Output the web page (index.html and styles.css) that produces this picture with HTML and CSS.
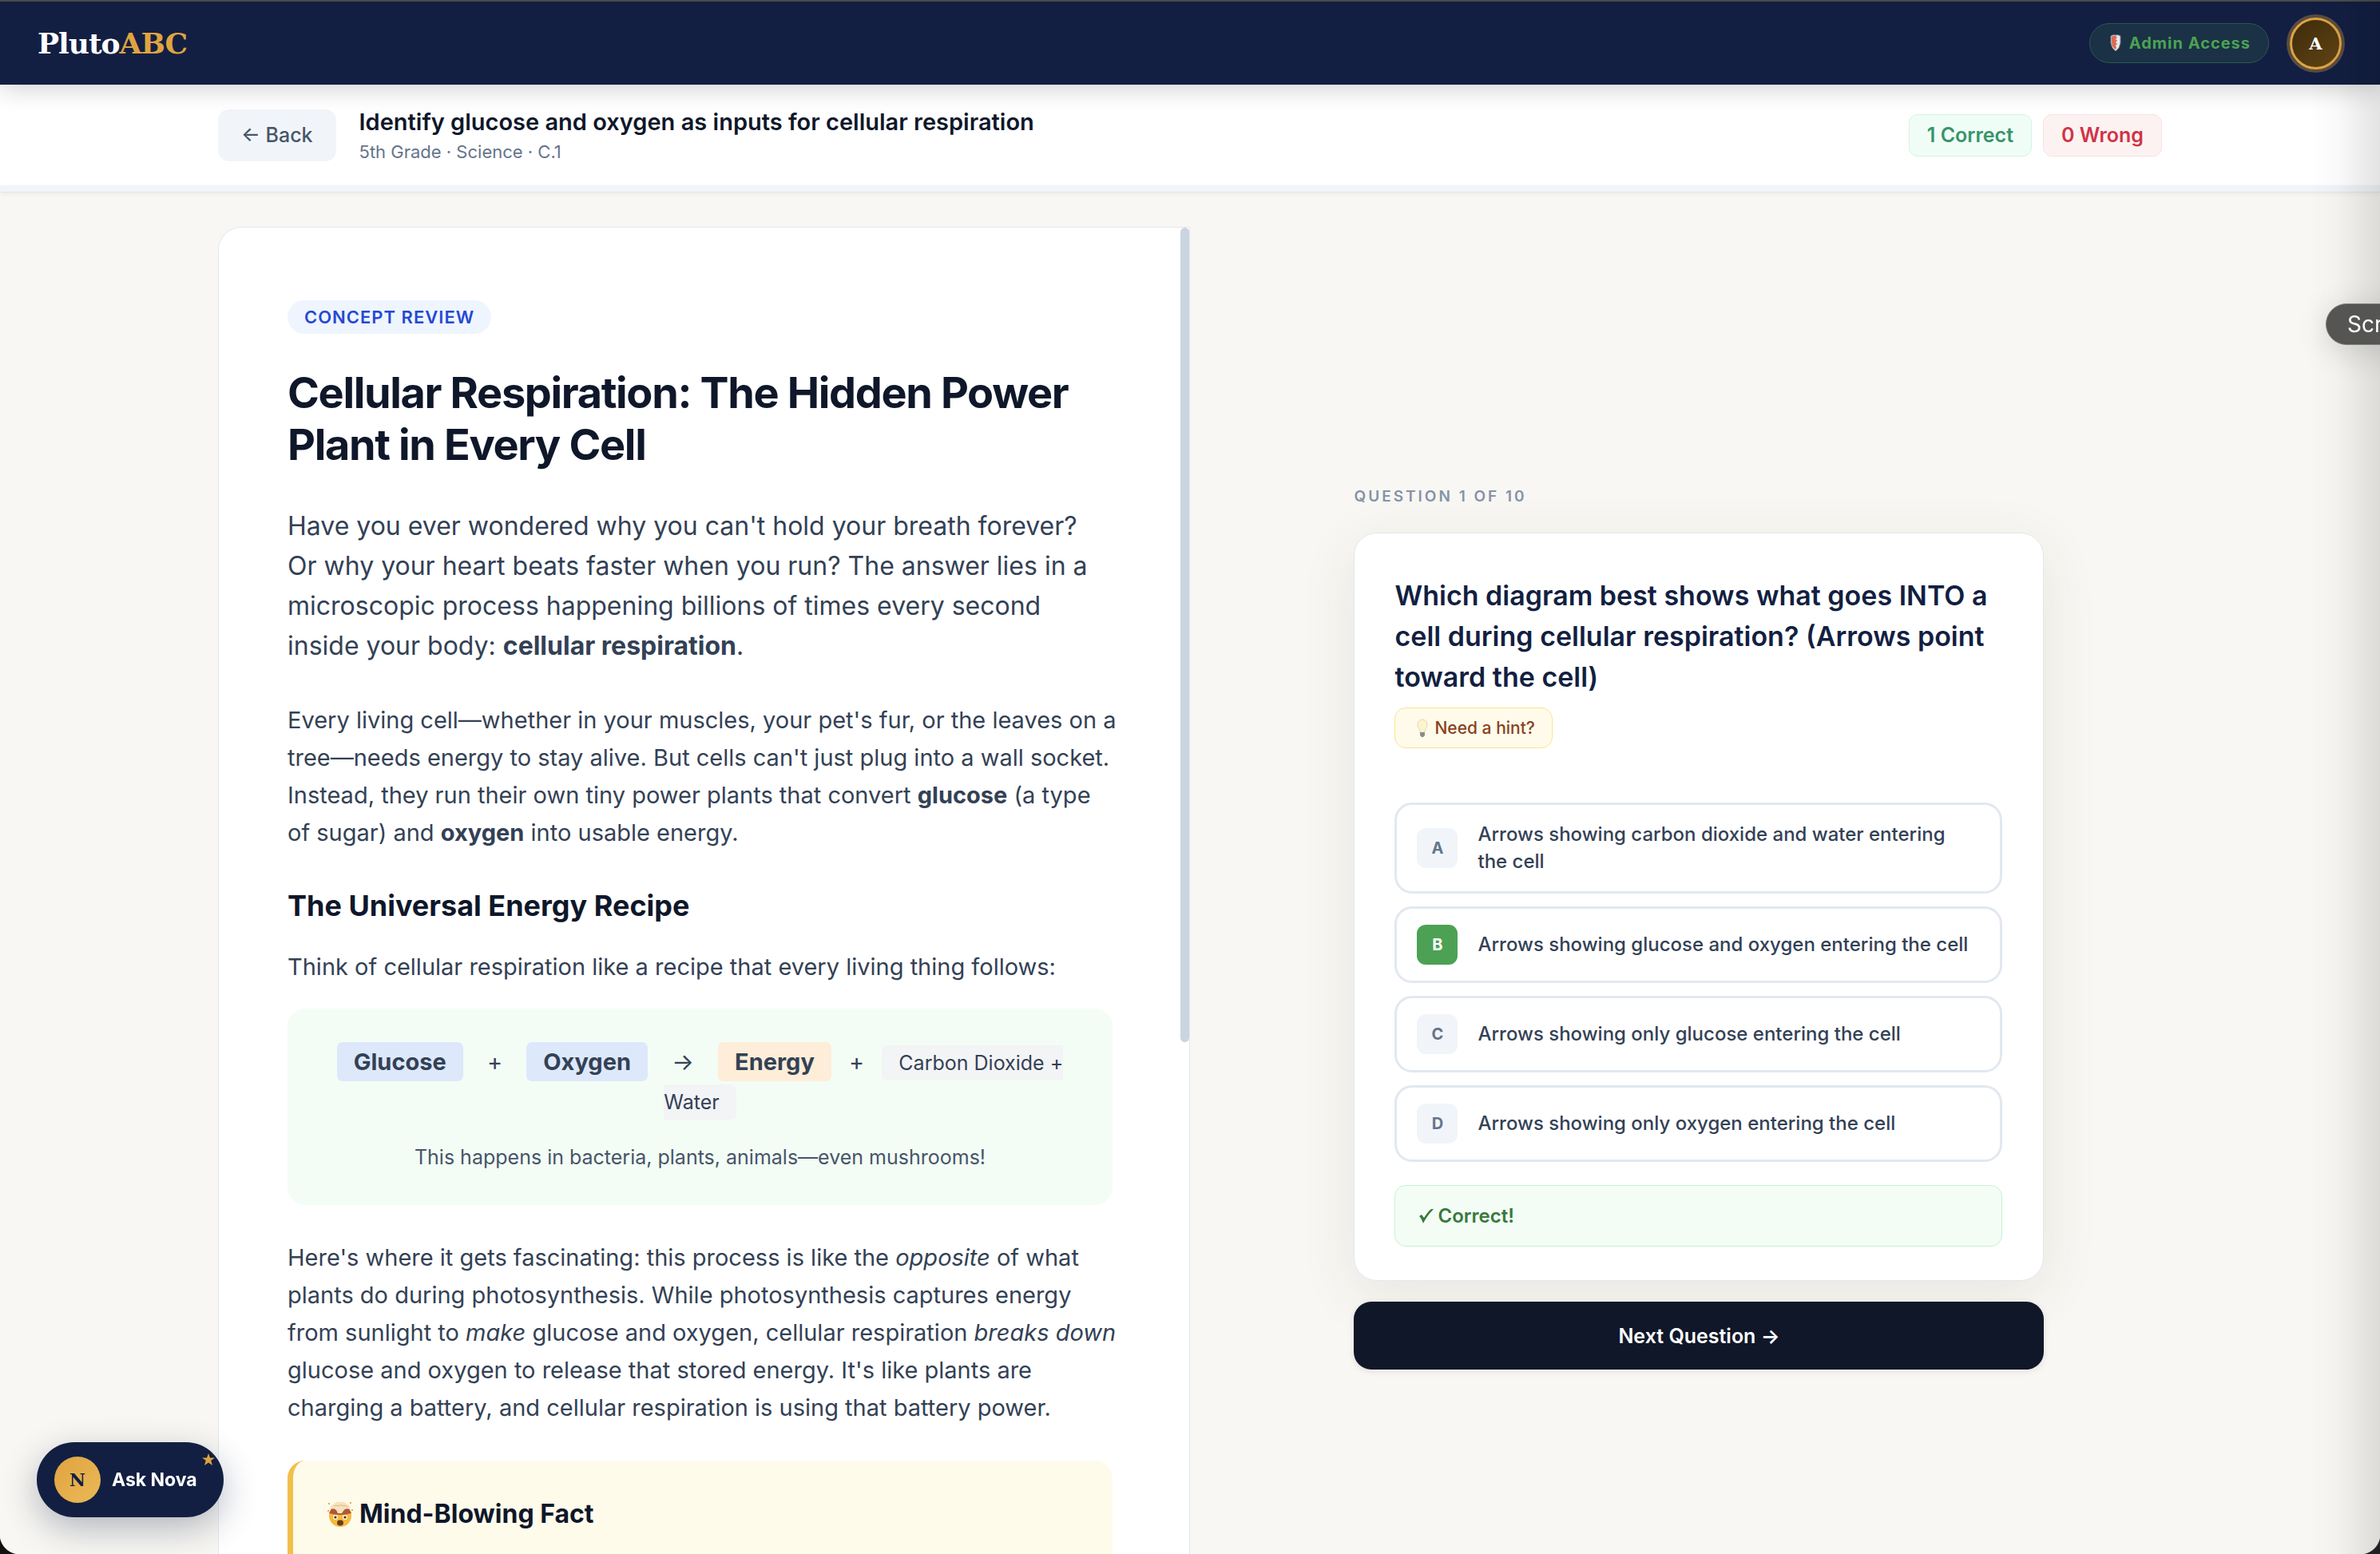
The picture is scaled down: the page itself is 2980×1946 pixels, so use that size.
FILE: index.html
```html
<!DOCTYPE html>
<html lang="en">
<head>
    <meta charset="UTF-8">
    <meta name="viewport" content="width=device-width, initial-scale=1.0">
    <title>PlutoABC</title>
    <link rel="stylesheet" href="styles.css">
</head>
<body>
    <header class="header">
        <a class="header__logo" href="#">Pluto<span>ABC</span></a>
        <div class="header__user">
            <span class="header__role">
                <svg class="header__shield" viewBox="0 0 14 22" aria-hidden="true">
                    <path d="M1 2Q4 0 7 1Q10 0 13 2V11Q12 18 7 21Q2 18 1 11Z" fill="#e9eaec" stroke="#6f7b86"/>
                    <path d="M2 3Q4 1 7 2L9 4L7 6L9 8L7 10L9 12L7 14L8 17L7 19Q3 17 2 11Z" fill="#dd6a58"/>
                </svg>
                Admin Access
            </span>
            <button class="header__avatar">A</button>
        </div>
    </header>

    <div class="lesson-bar">
        <div class="lesson-bar__inner">
            <button class="lesson-bar__back">← Back</button>
            <div class="lesson-bar__text">
                <h1 class="lesson-bar__title">Identify glucose and oxygen as inputs for cellular respiration</h1>
                <p class="lesson-bar__meta">5th Grade · Science · C.1</p>
            </div>
            <div class="score">
                <span class="score__item score__item--correct">1 Correct</span>
                <span class="score__item score__item--wrong">0 Wrong</span>
            </div>
        </div>
    </div>
    <div class="progress"></div>

    <main class="main">
        <section class="article">
            <div class="article__scrollbar"></div>
            <span class="article__badge">CONCEPT REVIEW</span>
            <h2 class="article__title">Cellular Respiration: The Hidden Power Plant in Every Cell</h2>
            <p class="article__lead">Have you ever wondered why you can't hold your breath forever? Or why your heart beats faster when you run? The answer lies in a microscopic process happening billions of times every second inside your body: <strong>cellular respiration</strong>.</p>
            <p class="article__text">Every living cell—whether in your muscles, your pet's fur, or the leaves on a tree—needs energy to stay alive. But cells can't just plug into a wall socket. Instead, they run their own tiny power plants that convert <strong>glucose</strong> (a type of sugar) and <strong>oxygen</strong> into usable energy.</p>
            <h3 class="article__heading">The Universal Energy Recipe</h3>
            <p class="article__text">Think of cellular respiration like a recipe that every living thing follows:</p>
            <div class="recipe">
                <div class="recipe__row">
                    <span class="recipe__item recipe__item--input">Glucose</span>
                    <span class="recipe__sign">+</span>
                    <span class="recipe__item recipe__item--input">Oxygen</span>
                    <span class="recipe__sign">→</span>
                    <span class="recipe__item recipe__item--energy">Energy</span>
                    <span class="recipe__sign recipe__sign--last">+</span>
                    <span class="recipe__item recipe__item--waste">Carbon Dioxide + Water</span>
                </div>
                <p class="recipe__note">This happens in bacteria, plants, animals—even mushrooms!</p>
            </div>
            <p class="article__text">Here's where it gets fascinating: this process is like the <em>opposite</em> of what plants do during photosynthesis. While photosynthesis captures energy from sunlight to <em>make</em> glucose and oxygen, cellular respiration <em>breaks down</em> glucose and oxygen to release that stored energy. It's like plants are charging a battery, and cellular respiration is using that battery power.</p>
            <div class="fact">
                <h3 class="fact__title">
                    <svg class="fact__icon" viewBox="0 0 32 32" aria-hidden="true">
                        <circle cx="16" cy="18" r="14" fill="#f7b93c"/>
                        <path d="M2 15Q16 19 30 15L27 9H5Z" fill="#b2573a"/>
                        <path d="M4 10Q2 4 8 4Q10 0 16 1Q22 0 24 4Q30 4 28 10Q22 8 20 12L18 15H13L11 11Q8 8 4 10Z" fill="#f6e3bd"/>
                        <path d="M8 6Q11 4 13 6Q17 3 20 6Q23 4 25 7" fill="none" stroke="#dfb781" stroke-width="1"/>
                        <circle cx="10" cy="20" r="3" fill="#fff6dc"/>
                        <circle cx="22" cy="20" r="3" fill="#fff6dc"/>
                        <circle cx="10" cy="20" r="1.6" fill="#4d2b12"/>
                        <circle cx="22" cy="20" r="1.6" fill="#4d2b12"/>
                        <ellipse cx="16" cy="27" rx="4" ry="3.4" fill="#6b3b1c"/>
                        <path d="M1 2h2v2h-2zM28 1h2v2h-2zM0 11h2v2h-2zM30 10h2v2h-2z" fill="#f2a83b"/>
                    </svg>
                    Mind-Blowing Fact
                </h3>
            </div>
        </section>

        <section class="quiz">
            <p class="quiz__counter">QUESTION 1 OF 10</p>
            <div class="quiz__card">
                <h2 class="quiz__question">Which diagram best shows what goes INTO a cell during cellular respiration? (Arrows point toward the cell)</h2>
                <button class="quiz__hint">
                    <svg class="quiz__bulb" viewBox="0 0 14 24" aria-hidden="true">
                        <path d="M7 1a6 6 0 0 0-6 7c0 4 3 5 3 9h6c0-4 3-5 3-9a6 6 0 0 0-6-7z" fill="#fdf3cf" stroke="#e6d9ad"/>
                        <path d="M4 17h6v4l-2 2h-2l-2-2z" fill="#8d8d8b"/>
                    </svg>
                    Need a hint?
                </button>
                <div class="quiz__options">
                    <button class="option"><span class="option__letter">A</span><span>Arrows showing carbon dioxide and water entering the cell</span></button>
                    <button class="option"><span class="option__letter option__letter--correct">B</span><span>Arrows showing glucose and oxygen entering the cell</span></button>
                    <button class="option"><span class="option__letter">C</span><span>Arrows showing only glucose entering the cell</span></button>
                    <button class="option"><span class="option__letter">D</span><span>Arrows showing only oxygen entering the cell</span></button>
                </div>
                <div class="quiz__feedback">
                    <svg class="quiz__check" viewBox="0 0 18 18" aria-hidden="true">
                        <path d="M0 9L3 7L6 11Q11 3 15 0H18Q10 8 5 18Q3 12 0 9Z" fill="#38793d"/>
                    </svg>
                    Correct!
                </div>
            </div>
            <button class="quiz__next">Next Question →</button>
        </section>
    </main>

    <button class="nova">
        <span class="nova__avatar">N</span>
        Ask Nova
        <svg class="nova__star" viewBox="0 0 16 15" aria-hidden="true">
            <path d="M8 0L10 5.500H16L11.200 9L13 15L8 11.400L3 15L4.800 9L0 5.500H6Z" fill="#dfa440"/>
        </svg>
    </button>
    <div class="edge-shade"></div>
    <div class="tooltip">Screenshot</div>
    <div class="corner corner--left"></div>
    <div class="corner corner--right"></div>
</body>
</html>
```
FILE: styles.css
```css
* {
    box-sizing: border-box;
}
body {
    margin: 0;
    height: 100vh;
    overflow: hidden;
    display: flex;
    flex-direction: column;
    font-family: "Inter", "Liberation Sans", sans-serif;
    color: #334155;
    background-color: #f8f7f3;
}
h1, h2, h3, p {
    margin: 0;
}
button {
    font-family: inherit;
    border: none;
    cursor: pointer;
}
.header {
    position: relative;
    z-index: 2;
    display: flex;
    justify-content: space-between;
    align-items: center;
    height: 106px;
    padding: 0 44px 0 47px;
    border-top: 2px solid #4b4b4b;
    background-color: #131f42;
    box-shadow: 0 4px 30px rgba(0, 0, 0, 0.2);
}
.header__logo {
    font-family: "DejaVu Serif", serif;
    font-size: 36px;
    font-weight: bold;
    letter-spacing: -1px;
    color: #fff;
    text-decoration: none;
}
.header__logo span {
    color: #dfa440;
}
.header__user {
    display: flex;
    align-items: center;
    gap: 22px;
}
.header__role {
    display: flex;
    align-items: center;
    gap: 10px;
    height: 50px;
    padding: 0 22px 0 25px;
    border: 1px solid #2a5a4e;
    border-radius: 25px;
    background-color: #1b3145;
    color: #4aa354;
    font-size: 20px;
    font-weight: 700;
    letter-spacing: 1px;
}
.header__shield {
    width: 14px;
    height: 22px;
}
.header__avatar {
    width: 65px;
    height: 65px;
    margin: 4px;
    padding: 0;
    border: 3px solid #dfa440;
    border-radius: 50%;
    background: linear-gradient(135deg, #3d2b0b, #634515);
    box-shadow: 0 0 0 4px #5a4c41;
    color: #fff;
    font-family: "DejaVu Serif", serif;
    font-size: 21px;
    font-weight: bold;
}
.lesson-bar {
    padding: 0 43px;
    background-color: #fff;
}
.lesson-bar__inner {
    display: flex;
    align-items: center;
    gap: 29px;
    height: 126px;
    max-width: 2434px;
    margin: 0 auto;
}
.lesson-bar__back {
    height: 65px;
    padding: 0 29px;
    border-radius: 14px;
    background-color: #f1f5f9;
    color: #475569;
    font-size: 25px;
    font-weight: 500;
}
.lesson-bar__text {
    padding-top: 4px;
}
.lesson-bar__title {
    font-size: 29px;
    line-height: 38px;
    font-weight: 600;
    color: #0f172a;
}
.lesson-bar__meta {
    font-size: 22px;
    line-height: 36px;
    color: #64748b;
}
.score {
    display: flex;
    gap: 14px;
    margin-left: auto;
}
.score__item {
    padding: 0 22px;
    border: 1px solid;
    border-radius: 11px;
    font-size: 25px;
    line-height: 51px;
    font-weight: 600;
}
.score__item--correct {
    color: #38946a;
    background-color: #f0fdf7;
    border-color: #d3f5e1;
}
.score__item--wrong {
    color: #d03447;
    background-color: #fdf2f2;
    border-color: #fbe0e2;
}
.progress {
    flex-shrink: 0;
    height: 9px;
    background-color: #f1f5f9;
    border-bottom: 1px solid #e2e8f0;
    box-shadow: 0 2px 5px rgba(0, 0, 0, 0.05);
}
.main {
    flex: 1;
    min-height: 0;
    display: grid;
    grid-template-columns: 21fr 20fr;
    gap: 58px;
    width: calc(100% - 86px);
    max-width: 2434px;
    margin: 0 auto;
    padding-top: 43px;
}
.article {
    position: relative;
    overflow: hidden;
    padding: 86px 96px 0 86px;
    border: 1px solid #e2e8f0;
    border-bottom: none;
    border-radius: 29px 0 0 0;
    background-color: #fff;
    font-size: 29px;
    line-height: 47px;
}
/* thumb of the reading pane */
.article__scrollbar {
    position: absolute;
    top: 0;
    right: 0;
    width: 11px;
    height: 1020px;
    border-radius: 6px;
    background-color: #cbd5e1;
}
.article__badge {
    display: inline-block;
    padding: 0 21px;
    border-radius: 21px;
    background-color: #eff5ff;
    color: #2549d3;
    font-size: 22px;
    line-height: 42px;
    font-weight: 600;
    letter-spacing: 1px;
}
.article__title {
    margin-top: 41px;
    font-size: 54px;
    line-height: 65px;
    font-weight: 700;
    letter-spacing: -0.025em;
    color: #0f172a;
}
.article__lead {
    margin: 45px 0 44px;
    padding-right: 10px;
    font-size: 32px;
    line-height: 50px;
}
.article__text {
    margin-right: -6px;
}
.article__heading {
    margin: 45px 0 29px;
    font-size: 36px;
    line-height: 47px;
    font-weight: 700;
    color: #0f172a;
}
.recipe {
    margin: 29px 0 42px;
    padding: 43px 43px 36px;
    border-radius: 22px;
    background-color: #f3fdf5;
    text-align: center;
}
.recipe__item {
    padding: 7px 21px;
    border-radius: 7px;
    font-weight: 700;
}
.recipe__item--input {
    background-color: #dde8fb;
}
.recipe__item--energy {
    background-color: #feedd8;
}
.recipe__item--waste {
    background-color: #f3f4f6;
    font-size: 25px;
    font-weight: 400;
}
.recipe__sign {
    margin: 0 22px;
}
.recipe__sign--last {
    margin: 0 14px;
}
.recipe__note {
    margin-top: 22px;
    font-size: 25px;
    color: #475569;
}
.fact {
    margin-top: 43px;
    padding: 43px 43px 200px;
    border-left: 7px solid #f2bf4a;
    border-radius: 22px;
    background-color: #fffbeb;
}
.fact__title {
    display: flex;
    align-items: center;
    gap: 8px;
    font-size: 32px;
    font-weight: 700;
    color: #0f172a;
}
.fact__icon {
    width: 32px;
    height: 32px;
}
.quiz {
    width: 100%;
    max-width: 864px;
    margin: 0 auto;
    padding-top: 325px;
}
.quiz__counter {
    margin-bottom: 33px;
    font-size: 19px;
    line-height: 25px;
    font-weight: 600;
    letter-spacing: 3px;
    color: #8592a8;
}
.quiz__card {
    padding: 52px 51px 42px 50px;
    border: 1px solid #e2e8f0;
    border-radius: 29px;
    background-color: #fff;
    box-shadow: 0 18px 72px rgba(60, 50, 30, 0.09);
}
.quiz__question {
    margin-bottom: 13px;
    font-size: 34px;
    line-height: 51px;
    font-weight: 600;
    color: #131f42;
}
.quiz__hint {
    display: flex;
    align-items: center;
    gap: 8px;
    height: 51px;
    padding: 0 21px 0 27px;
    border: 1px solid #fbe38d;
    border-radius: 14px;
    background-color: #fffbeb;
    color: #88421b;
    font-size: 21px;
    font-weight: 500;
}
.quiz__bulb {
    width: 14px;
    height: 24px;
}
.quiz__options {
    display: flex;
    flex-direction: column;
    gap: 16px;
    margin: 68px 0 29px;
}
.option {
    display: flex;
    align-items: center;
    gap: 25px;
    min-height: 96px;
    padding: 20px 32px 20px 25px;
    border: 3px solid #e2e8f0;
    border-radius: 22px;
    background-color: #fff;
    color: #334155;
    font-size: 24px;
    line-height: 34px;
    font-weight: 500;
    text-align: left;
}
.option__letter {
    flex-shrink: 0;
    width: 51px;
    border-radius: 11px;
    background-color: #f1f5f9;
    color: #64748b;
    font-size: 20px;
    line-height: 50px;
    font-weight: 700;
    text-align: center;
}
.option__letter--correct {
    background-color: #4ca154;
    color: #fff;
}
.quiz__feedback {
    display: flex;
    align-items: center;
    gap: 5px;
    height: 77px;
    padding: 0 30px;
    border: 1px solid #c3f3d0;
    border-radius: 14px;
    background-color: #f3fdf5;
    color: #38793d;
    font-size: 24px;
    font-weight: 600;
}
.quiz__check {
    width: 18px;
    height: 18px;
}
.quiz__next {
    width: 100%;
    height: 85px;
    margin-top: 26px;
    border-radius: 22px;
    background-color: #101729;
    box-shadow: 0 2px 8px rgba(0, 0, 0, 0.1);
    color: #fff;
    font-size: 25px;
    font-weight: 600;
}
.nova {
    position: fixed;
    left: 46px;
    bottom: 46px;
    display: flex;
    align-items: center;
    gap: 14px;
    height: 94px;
    padding: 0 33px 0 22px;
    border-radius: 47px;
    background-color: #131f42;
    box-shadow: 0 14px 44px rgba(19, 31, 66, 0.3);
    color: #fff;
    font-size: 23px;
    font-weight: 700;
}
.nova__avatar {
    width: 58px;
    border-radius: 50%;
    background: linear-gradient(135deg, #dfa440, #ebb957);
    color: #131f42;
    font-family: "DejaVu Serif", serif;
    font-size: 22px;
    line-height: 58px;
}
.nova__star {
    position: absolute;
    top: 14px;
    right: 11px;
    width: 16px;
    height: 15px;
}
.edge-shade {
    position: fixed;
    top: 0;
    right: 0;
    bottom: 0;
    z-index: 3;
    width: 90px;
    background: linear-gradient(to right, transparent, rgba(0, 0, 0, 0.02) 40%, rgba(0, 0, 0, 0.11));
    pointer-events: none;
}
/* runs past the right edge of the window */
.tooltip {
    position: fixed;
    top: 380px;
    left: calc(100% - 68px);
    z-index: 4;
    padding: 0 26px;
    border: 1px solid #7c7c7a;
    border-radius: 26px;
    background-color: #555553;
    box-shadow: 0 8px 40px rgba(0, 0, 0, 0.15);
    color: #fff;
    font-size: 28px;
    line-height: 50px;
}
.corner {
    position: fixed;
    bottom: 0;
    z-index: 5;
    width: 25px;
    height: 25px;
}
.corner--left {
    left: 0;
    background: radial-gradient(circle at 100% 0, transparent 25px, #111 26px);
}
.corner--right {
    right: 0;
    background: radial-gradient(circle at 0 0, transparent 25px, #222 26px);
}
```
